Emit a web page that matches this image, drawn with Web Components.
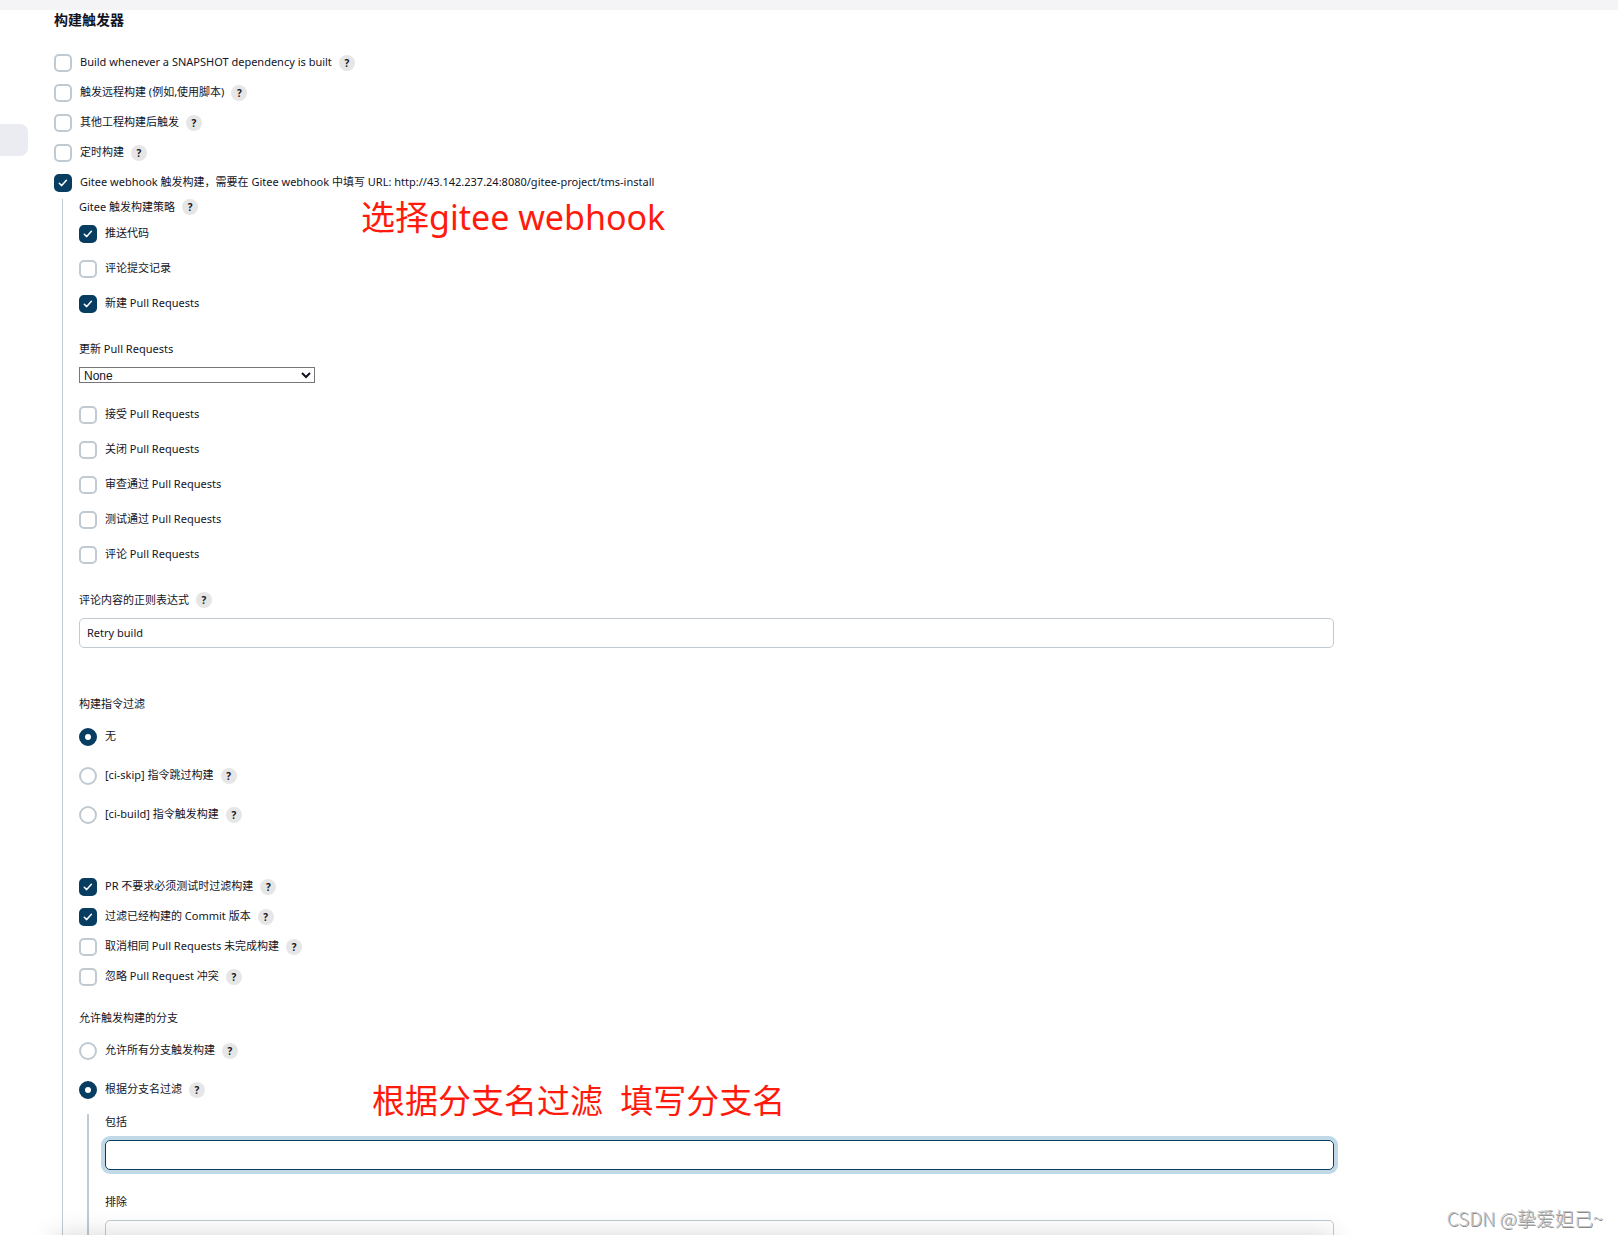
<!DOCTYPE html>
<html lang="zh-CN">
<head>
<meta charset="utf-8">
<title>构建触发器</title>
<style>
  html, body { height: 100%; margin: 0; }
  body {
    font: 11px/16px "Noto Sans", "Noto Sans CJK SC", sans-serif;
    color: #14141f;
    background: #fff;
    overflow: hidden;
    --accent: #063d61;
    --line: #c1cad0;
  }
</style>
</head>
<body>
<config-page>
  <config-section heading="构建触发器">
    <option-list gap="normal">
      <option-row label="Build whenever a SNAPSHOT dependency is built" help></option-row>
      <option-row label="触发远程构建 (例如,使用脚本)" help></option-row>
      <option-row label="其他工程构建后触发" help></option-row>
      <option-row label="定时构建" help></option-row>
      <option-row label="Gitee webhook 触发构建，需要在 Gitee webhook 中填写 URL: http://43.142.237.24:8080/gitee-project/tms-install" checked></option-row>
    </option-list>
    <nested-block>
      <option-list gap="wide" space="section" heading="Gitee 触发构建策略" help>
        <option-row label="推送代码" checked></option-row>
        <option-row label="评论提交记录"></option-row>
        <option-row label="新建 Pull Requests" checked></option-row>
      </option-list>
      <select-field label="更新 Pull Requests" value="None"></select-field>
      <option-list gap="wide" space="section">
        <option-row label="接受 Pull Requests"></option-row>
        <option-row label="关闭 Pull Requests"></option-row>
        <option-row label="审查通过 Pull Requests"></option-row>
        <option-row label="测试通过 Pull Requests"></option-row>
        <option-row label="评论 Pull Requests"></option-row>
      </option-list>
      <text-field label="评论内容的正则表达式" value="Retry build" help space="large"></text-field>
      <option-list gap="radio" space="xlarge" heading="构建指令过滤">
        <option-row type="radio" label="无" checked></option-row>
        <option-row type="radio" label="[ci-skip] 指令跳过构建" help></option-row>
        <option-row type="radio" label="[ci-build] 指令触发构建" help></option-row>
      </option-list>
      <option-list gap="normal" space="medium">
        <option-row label="PR 不要求必须测试时过滤构建" help checked></option-row>
        <option-row label="过滤已经构建的 Commit 版本" help checked></option-row>
        <option-row label="取消相同 Pull Requests 未完成构建" help></option-row>
        <option-row label="忽略 Pull Request 冲突" help></option-row>
      </option-list>
      <option-list gap="radio" heading="允许触发构建的分支">
        <option-row type="radio" label="允许所有分支触发构建" help></option-row>
        <option-row type="radio" label="根据分支名过滤" help checked></option-row>
      </option-list>
      <nested-block strong>
        <text-field label="包括" value="" active space="medium"></text-field>
        <text-field label="排除" value=""></text-field>
      </nested-block>
    </nested-block>
  </config-section>
  <red-note slot="notes" style="left:361px;top:193px;font-size:34px">选择gitee webhook</red-note>
  <red-note slot="notes" style="left:372px;top:1077px">根据分支名过滤&nbsp; 填写分支名</red-note>
  <water-mark slot="notes">CSDN @挚爱妲己~</water-mark>
</config-page>

<script>
const define = (name, render) => customElements.define(name, class extends HTMLElement {
  connectedCallback() {
    if (!this.shadowRoot) this.attachShadow({ mode: "open" }).innerHTML = render(this);
  }
});
const attr = (el, name) => (el.getAttribute(name) || "").replace(/"/g, "&quot;");
const help = el => el.hasAttribute("help") ? "<help-button></help-button>" : "";

define("config-page", () => `
  <style>
    :host { display: block; height: 100%; box-sizing: border-box; padding-bottom: 3px; position: relative; }
    .view { display: flex; height: 100%; overflow: hidden; position: relative; }
    .view::before { content: ""; position: absolute; inset: 0 0 auto; height: 10px; background: #f4f4f7; }
    nav { flex: 0 0 54px; padding-top: 124px; box-sizing: border-box; }
    .item { width: 28px; height: 32px; background: #ebecf2; border-radius: 0 8px 8px 0; }
    main { flex: 1; min-width: 0; padding: 10px 284px 0 0; }
    .bar { position: absolute; left: 54px; right: 284px; top: 100%; height: 40px; box-shadow: 0 0 26px rgba(0,0,0,.16); }
  </style>
  <div class="view">
    <nav><div class="item"></div></nav>
    <main><slot></slot></main>
    <div class="bar"></div>
  </div>
  <slot name="notes"></slot>`);

define("config-section", el => `
  <style>
    :host { display: block; }
    h2 { margin: 0 0 24px; font-size: 14px; line-height: 20px; font-weight: 700; }
  </style>
  <h2>${attr(el, "heading")}</h2><slot></slot>`);

define("nested-block", () => `
  <style>
    :host { display: block; margin: 7px 0 0 8px; padding-left: 16px; border-left: 1px solid var(--line); }
    :host([strong]) { margin-top: 15px; border-left-width: 2px; height: 200px; }
  </style>
  <slot></slot>`);

define("option-list", el => `
  <style>
    :host { display: block; }
    :host([space="section"]) { margin-bottom: 28px; }
    :host([space="medium"]) { margin-bottom: 24px; }
    :host([space="xlarge"]) { margin-bottom: 54px; }
    .head { display: flex; align-items: center; gap: 7px; margin-bottom: 10px; }
    :host([gap="radio"]) .head { margin-bottom: 16px; }
    .rows { display: flex; flex-direction: column; gap: 12px; }
    :host([gap="wide"]) .rows { gap: 17px; }
    :host([gap="radio"]) .rows { gap: 21px; }
  </style>
  ${el.hasAttribute("heading") ? `<div class="head"><span>${attr(el, "heading")}</span>${help(el)}</div>` : ""}
  <div class="rows"><slot></slot></div>`);

define("option-row", el => {
  const type = el.getAttribute("type") || "checkbox";
  return `
  <style>
    :host { display: flex; align-items: center; gap: 7px; height: 18px; }
    label { display: flex; align-items: center; gap: 8px; white-space: nowrap; }
    .box { position: relative; display: block; width: 18px; height: 18px; }
    input { appearance: none; display: block; margin: 0; width: 18px; height: 18px; box-sizing: border-box;
      border: 2px solid var(--line); border-radius: 5px; background: #fff; }
    input[type=radio] { border-radius: 50%; }
    input:checked { border-color: var(--accent); background: var(--accent); }
    input[type=radio]:checked { border-width: 6px; background: #fff; }
    svg { position: absolute; inset: 0; display: none; pointer-events: none; }
    input[type=checkbox]:checked + svg { display: block; }
    .text { padding-bottom: 2px; }
  </style>
  <label><span class="box"><input type="${type}"${el.hasAttribute("checked") ? " checked" : ""}>
    <svg width="18" height="18" viewBox="0 0 18 18" fill="none" stroke="#fff" stroke-width="1.5" stroke-linecap="round" stroke-linejoin="round"><path d="M5.3 9.3 7.7 11.6 12.4 6.2"/></svg></span>
    <span class="text">${attr(el, "label")}</span></label>${help(el)}`;
});

define("help-button", () => `
  <style>
    :host { display: block; flex: none; }
    button { display: flex; align-items: center; justify-content: center; width: 16px; height: 16px; padding: 0; border: 0;
      border-radius: 50%; background: #e6e6e6; color: #14141f; font: 700 10px/16px "Open Sans", sans-serif; }
  </style>
  <button type="button" aria-label="帮助">?</button>`);

define("text-field", el => `
  <style>
    :host { display: block; }
    :host([space="medium"]) { margin-bottom: 24px; }
    :host([space="large"]) { margin-bottom: 48px; }
    .head { display: flex; align-items: center; gap: 7px; margin-bottom: 10px; }
    input { display: block; width: 100%; height: 30px; box-sizing: border-box; padding: 0 7px 2px; border: 1px solid var(--line);
      border-radius: 5px; background: none; font: inherit; color: inherit; outline: none; }
    :host([active]) input { border-color: var(--accent); box-shadow: 0 0 0 4px #c1d9e6; }
  </style>
  <div class="head"><label for="field">${attr(el, "label")}</label>${help(el)}</div>
  <input id="field" type="text" value="${attr(el, "value")}">`);

define("select-field", el => `
  <style>
    :host { display: block; margin-bottom: 23px; }
    label { display: block; margin-bottom: 10px; }
    select { display: block; width: 236px; height: 16px; padding: 0; border: 1px solid #767676; border-radius: 0;
      background: #fff; color: inherit; font: 12px/14px "Liberation Sans", sans-serif; }
  </style>
  <label for="choice">${attr(el, "label")}</label>
  <select id="choice"><option>${attr(el, "value")}</option></select>`);

define("red-note", () => `
  <style>
    :host { position: absolute; font-size: 33px; line-height: 48px; color: #ff1a0d; white-space: nowrap; }
  </style>
  <slot></slot>`);

define("water-mark", () => `
  <style>
    :host { position: absolute; right: 15px; bottom: 7px; font: 300 19px/26px "Noto Sans CJK SC", sans-serif;
      color: #c4c4c4; text-shadow: 1px 1px 0 #8a8a8a; white-space: nowrap; }
  </style>
  <slot></slot>`);
</script>
</body>
</html>
